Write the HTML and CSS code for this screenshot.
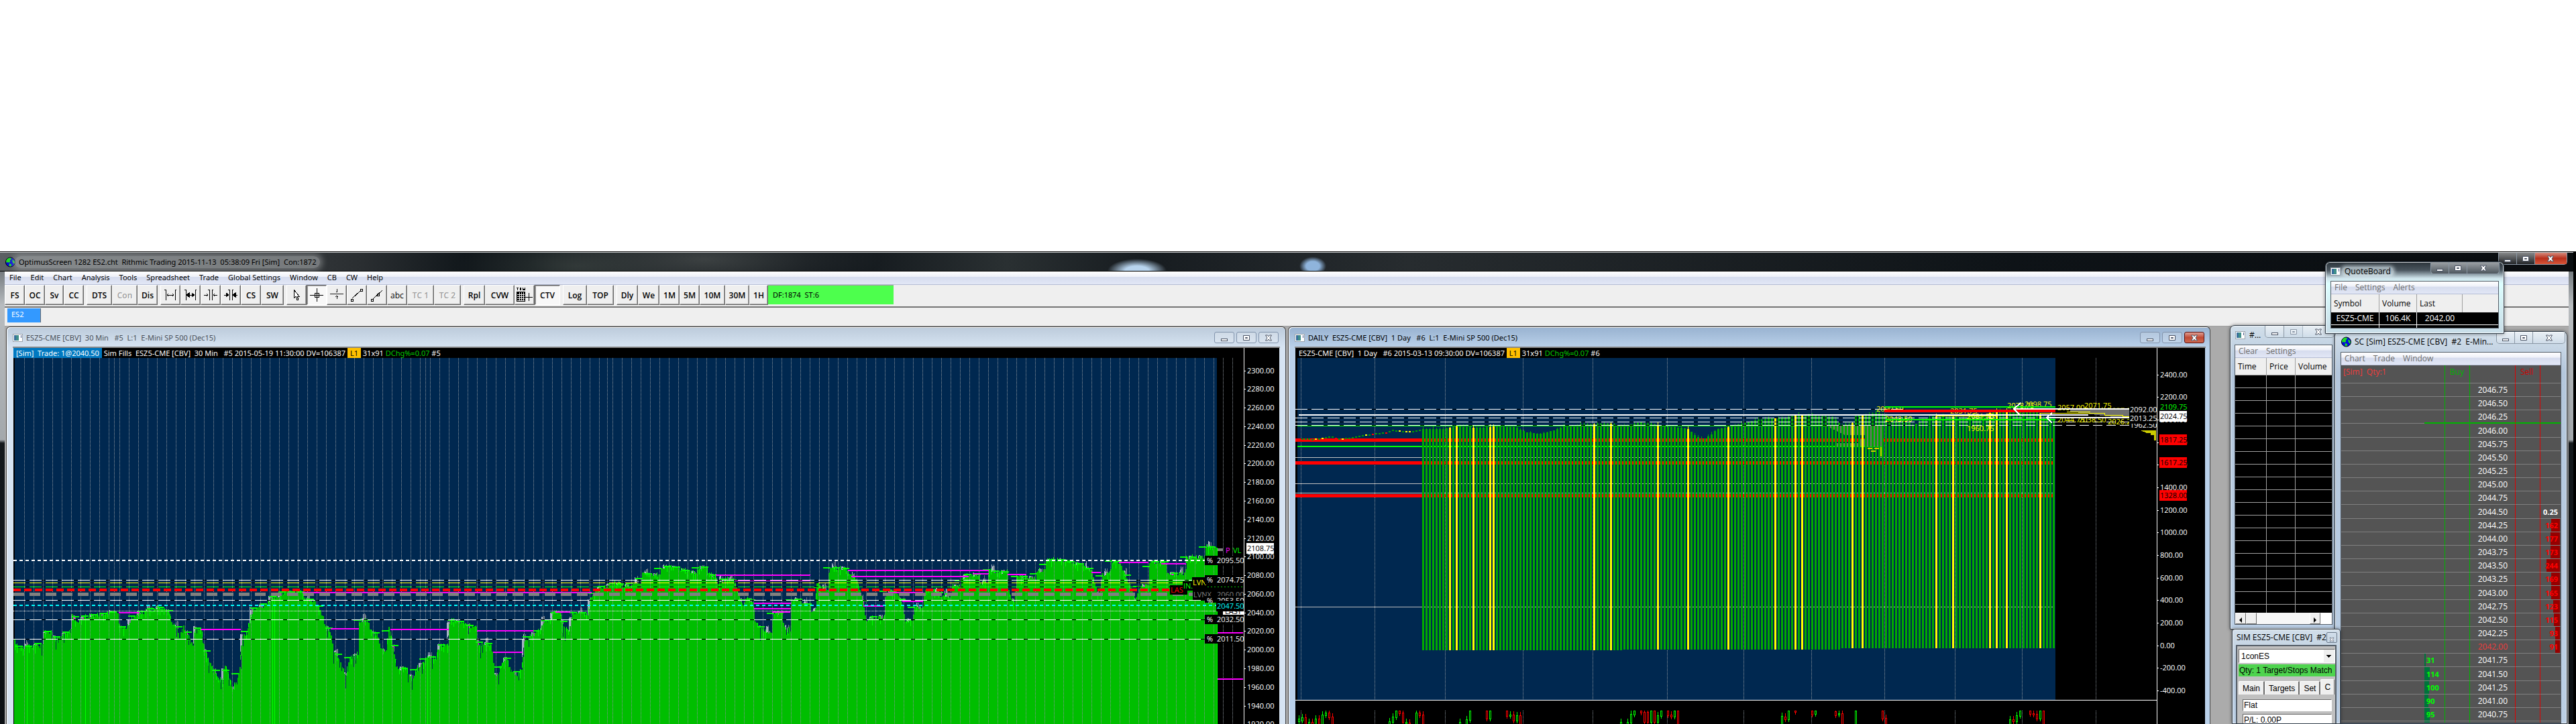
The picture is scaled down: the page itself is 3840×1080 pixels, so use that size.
FILE: index.html
```html
<!DOCTYPE html>
<html lang="en">
<head>
    <meta charset="utf-8">
    <meta name="viewport" content="width=device-width, initial-scale=1">
    <title>OptimusScreen 1282 ES2.cht</title>
    <link rel="stylesheet" href="styles.css">
</head>
<body>
    <!-- shared icons -->
    <svg class="defs" aria-hidden="true">
        <symbol id="i-globe" viewBox="0 0 16 16">
            <circle cx="8" cy="8" r="7.5" fill="#0008e0" stroke="#000"/>
            <path d="M3 3l3-2 4 1-1 2-2 1 1 2-2 2-2-1-2 1-1-3zM11 4l2 1 2 3-1 3-2-2-1-3zM6 10l3 1 1 2-2 2-2-1z" fill="#1fe01f"/>
        </symbol>
        <symbol id="i-app" viewBox="0 0 15 12">
            <rect x=".5" y=".5" width="14" height="11" fill="#fff" stroke="#9aa3ad"/>
            <rect x="2" y="2" width="7" height="8" fill="#3f8f8a"/>
            <rect x="2" y="2" width="3" height="8" fill="#3a6f9c"/>
            <rect x="12" y="2" width="1" height="4" fill="#4a5a8a"/>
        </symbol>
        <symbol id="i-min" viewBox="0 0 12 12"><rect x="1.500" y="7.500" width="9" height="3" fill="#fff" stroke="#4c5566"/></symbol>
        <symbol id="i-max" viewBox="0 0 12 12"><path d="M1.500 2.500h9v7h-9z M4.500 5.500h3v1h-3z" fill="#fff" fill-rule="evenodd" stroke="#4c5566"/></symbol>
        <symbol id="i-close" viewBox="0 0 12 12"><path d="M1.500 2h3L6 4l1.500-2h3L8 6l2.500 4h-3L6 8l-1.500 2h-3L4 6z" fill="#fff" stroke="#4c5566"/></symbol>
    </svg>

    <main class="app">
        <header class="app-title">
            <svg class="globe"><use href="#i-globe"/></svg>
            <h1>OptimusScreen 1282 ES2.cht&nbsp; Rithmic Trading 2015-11-13&nbsp; 05:38:09 Fri [Sim]&nbsp; Con:1872</h1>
            <div class="controls">
                <button aria-label="Minimize"><svg><use href="#i-min"/></svg></button>
                <button aria-label="Maximize"><svg><use href="#i-max"/></svg></button>
                <button class="close" aria-label="Close"><svg><use href="#i-close"/></svg></button>
            </div>
        </header>

        <div class="app-body">
            <nav class="menu">
                <a href="#">File</a><a href="#">Edit</a><a href="#">Chart</a><a href="#">Analysis</a><a href="#">Tools</a><a href="#">Spreadsheet</a><a href="#">Trade</a><a href="#">Global Settings</a><a href="#">Window</a><a href="#">CB</a><a href="#">CW</a><a href="#">Help</a>
            </nav>

            <div class="toolbar">
                <div class="group">
                    <button>FS</button><button>OC</button><button class="w28">Sv</button><button>CC</button>
                </div>
                <div class="group">
                    <button class="w38">DTS</button><button class="w38" disabled>Con</button><button>Dis</button>
                </div>
                <div class="group">
                    <button aria-label="Expand bars"><svg viewBox="0 0 20 20"><path d="M1 2h2v16M19 2h-2v16M5 10h10M7 8l-2 2 2 2M13 8l2 2-2 2"/></svg></button>
                    <button aria-label="Widen bars"><svg viewBox="0 0 20 20"><path d="M1 2h2v16M19 2h-2v16M5 10h10"/><path d="M4 10l4-3v6zM16 10l-4-3v6z" fill="#000"/></svg></button>
                    <button aria-label="Compress bars"><svg viewBox="0 0 20 20"><path d="M8 2v16M12 2v16M6 2h2M12 2h2M0 10h6M4 8l2 2-2 2M20 10h-6M16 8l-2 2 2 2"/></svg></button>
                    <button aria-label="Narrow bars"><svg viewBox="0 0 20 20"><path d="M8 2v16M12 2v16M6 2h2M12 2h2M0 10h6M20 10h-6"/><path d="M3 7l4 3-4 3zM17 7l-4 3 4 3z" fill="#000"/></svg></button>
                    <button>CS</button><button class="w34">SW</button>
                </div>
                <div class="group">
                    <button aria-label="Pointer"><svg viewBox="0 0 20 20"><path d="M6 2v13l3-3 2 6 2-1-2-5h3z" fill="#fff"/></svg></button>
                    <button class="pressed" aria-label="Crosshair"><svg viewBox="0 0 20 20"><path d="M0 10h20M10 0v20M7 7h6v6H7z"/></svg></button>
                    <button aria-label="Horizontal line"><svg viewBox="0 0 22 20"><path d="M0 8h22M11 0v6M9 4l2 2 2-2M11 17v-6M9 13l2-2 2 2"/></svg></button>
                    <button aria-label="Line"><svg viewBox="0 0 20 20"><path d="M3 15l12-11M15 1h3v3h-3zM1 16h3v3H1z"/></svg></button>
                    <button aria-label="Ray"><svg viewBox="0 0 20 20"><path d="M4 16l14-13M10 8h3v3h-3zM1 16h3v3H1z"/></svg></button>
                    <button class="plain">abc</button>
                    <button class="w40" disabled>TC 1</button><button class="w40" disabled>TC 2</button>
                </div>
                <div class="group">
                    <button class="w32">Rpl</button><button class="w44">CVW</button>
                    <button aria-label="TVW"><svg class="tvw" viewBox="0 0 24 24"><path d="M0 1h3M1.500 1v4M5 1l1 4 1-4M9 1l1 4 1-2 1 2 1-4M13 15h11M18.500 9v12"/><path d="M0 7h13v15H0z" fill="#000" stroke="none"/><path d="M1 11h11M1 14h11M1 17h11M1 20h11M4 8v13M7 8v13M10 8v13" stroke="#efefef"/></svg></button>
                    <button class="w38 pressed">CTV</button>
                </div>
                <div class="group">
                    <button class="w36">Log</button><button class="w40">TOP</button>
                </div>
                <div class="group">
                    <button class="w32">Dly</button><button class="w32">We</button><button>1M</button><button>5M</button><button class="w38">10M</button><button class="w36">30M</button><button class="w28">1H</button>
                    <output class="feed">DF:1874&nbsp; ST:6</output>
                </div>
            </div>

            <div class="tabs"><a href="#">ES2</a></div>

            <div class="desktop">
                <section class="child child-30min">
                    <header>
                        <svg class="app-icon"><use href="#i-app"/></svg>
                        <h2>ESZ5-CME [CBV]&nbsp; 30 Min&nbsp;&nbsp; #5&nbsp; L:1&nbsp; E-Mini SP 500 (Dec15)</h2>
                        <div class="mdi-controls">
                            <button aria-label="Minimize"><svg><use href="#i-min"/></svg></button>
                            <button aria-label="Maximize"><svg><use href="#i-max"/></svg></button>
                            <button aria-label="Close"><svg><use href="#i-close"/></svg></button>
                        </div>
                    </header>
                    <div class="chart">
                        <svg id="chart30" viewBox="20 518 1887 562" preserveAspectRatio="xMinYMin slice"></svg>
                        <p><span class="trade">[Sim]&nbsp; Trade: 1@2040.50</span> Sim Fills&nbsp; ESZ5-CME [CBV]&nbsp; 30 Min&nbsp;&nbsp; #5 2015-05-19 11:30:00 DV=106387 <b>L1</b> 31x91 <i>DChg%=0.07</i> #5</p>
                    </div>
                </section>

                <section class="child child-daily">
                    <header>
                        <svg class="app-icon"><use href="#i-app"/></svg>
                        <h2>DAILY&nbsp; ESZ5-CME [CBV]&nbsp; 1 Day&nbsp;&nbsp; #6&nbsp; L:1&nbsp; E-Mini SP 500 (Dec15)</h2>
                        <div class="mdi-controls">
                            <button aria-label="Minimize"><svg><use href="#i-min"/></svg></button>
                            <button aria-label="Maximize"><svg><use href="#i-max"/></svg></button>
                            <button class="close" aria-label="Close"><svg><use href="#i-close"/></svg></button>
                        </div>
                    </header>
                    <div class="chart">
                        <svg id="chartDaily" viewBox="1931 518 1356 562" preserveAspectRatio="xMinYMin slice"></svg>
                        <p>ESZ5-CME [CBV]&nbsp; 1 Day&nbsp;&nbsp; #6 2015-03-13 09:30:00 DV=106387 <b>L1</b> 31x91 <i>DChg%=0.07</i> #6</p>
                    </div>
                </section>
            </div>
        </div>

        <section class="float time-sales">
            <header>
                <svg class="app-icon"><use href="#i-app"/></svg>
                <h2>#...</h2>
                <div class="controls">
                    <button aria-label="Minimize"><svg><use href="#i-min"/></svg></button>
                    <button aria-label="Maximize" disabled><svg><use href="#i-max"/></svg></button>
                    <button class="close" aria-label="Close"><svg><use href="#i-close"/></svg></button>
                </div>
            </header>
            <div class="pane">
                <nav class="menu"><a href="#">Clear</a><a href="#">Settings</a></nav>
                <table>
                    <thead><tr><th>Time</th><th>Price</th><th>Volume</th></tr></thead>
                    <tbody id="sales"></tbody>
                </table>
                <div class="scroll">
                    <button aria-label="Scroll left"><svg viewBox="0 0 8 8"><path d="M6 0v8L2 4z"/></svg></button>
                    <button aria-label="Thumb"></button>
                    <span></span>
                    <button aria-label="Scroll right"><svg viewBox="0 0 8 8"><path d="M2 0v8l4-4z"/></svg></button>
                </div>
            </div>
        </section>

        <section class="float trade-window">
            <header>
                <h2>SIM ESZ5-CME [CBV]&nbsp; #2</h2>
                <button class="small-close" aria-label="Close"><svg><use href="#i-close"/></svg></button>
            </header>
            <form class="pane">
                <select aria-label="Trade configuration"><option>1conES</option></select>
                <output>Qty: 1 Target/Stops Match</output>
                <div class="tab-row">
                    <button type="button">Main</button><button type="button">Targets</button><button type="button">Set</button><button type="button" class="on">C</button>
                </div>
                <div class="fields">
                    <input type="text" aria-label="Position" value="Flat">
                    <input type="text" aria-label="Profit and loss" value="P/L: 0.00P">
                </div>
            </form>
        </section>

        <section class="float dom-window">
            <header>
                <svg class="globe"><use href="#i-globe"/></svg>
                <h2>SC [Sim] ESZ5-CME [CBV]&nbsp; #2&nbsp; E-Min...</h2>
                <div class="controls">
                    <button aria-label="Minimize"><svg><use href="#i-min"/></svg></button>
                    <button aria-label="Maximize"><svg><use href="#i-max"/></svg></button>
                    <button class="close" aria-label="Close"><svg><use href="#i-close"/></svg></button>
                </div>
            </header>
            <div class="pane">
                <nav class="menu"><a href="#">Chart</a><a href="#">Trade</a><a href="#">Window</a></nav>
                <table>
                    <colgroup><col class="c-rest"><col class="c-bid"><col class="c-buy"><col class="c-price"><col class="c-sell"><col></colgroup>
                    <thead>
                        <tr><th colspan="2" class="qty">[Sim]&nbsp; Qty:1</th><th class="buy">Buy</th><th></th><th class="sell">Sell</th><th></th></tr>
                    </thead>
                    <tbody id="ladder"></tbody>
                </table>
            </div>
        </section>

        <section class="float quote-board">
            <header>
                <svg class="app-icon"><use href="#i-app"/></svg>
                <h2>QuoteBoard</h2>
                <div class="controls">
                    <button aria-label="Minimize"><svg><use href="#i-min"/></svg></button>
                    <button aria-label="Maximize"><svg><use href="#i-max"/></svg></button>
                    <button class="close" aria-label="Close"><svg><use href="#i-close"/></svg></button>
                </div>
            </header>
            <div class="pane">
                <nav class="menu"><a href="#">File</a><a href="#">Settings</a><a href="#">Alerts</a></nav>
                <table>
                    <thead><tr><th>Symbol</th><th>Volume</th><th>Last</th><th></th></tr></thead>
                    <tbody>
                        <tr><td>ESZ5-CME</td><td>106.4K</td><td>2042.00</td><td></td></tr>
                        <tr><td></td><td></td><td></td><td></td></tr>
                    </tbody>
                </table>
            </div>
        </section>
    </main>

    <script src="charts.js"></script>
</body>
</html>
```
FILE: styles.css
```css
* {
    margin: 0;
    padding: 0;
    box-sizing: border-box;
}

body {
    min-height: 100vh;
    display: flex;
    flex-direction: column;
    padding-top: 375px;
    overflow: hidden;
    background: #fff;
    font-family: "Noto Sans", "Open Sans", sans-serif;
    font-size: 11px;
    line-height: 14px;
    color: #000;
}

a {
    color: inherit;
    text-decoration: none;
}

h1, h2 {
    font-size: 11px;
    font-weight: 400;
    white-space: pre;
}

button {
    font-family: inherit;
    border: 0;
    background: none;
}

.defs {
    position: absolute;
    width: 0;
    height: 0;
}

.globe {
    width: 15px;
    height: 16px;
    flex: none;
}

.app-icon {
    width: 15px;
    height: 12px;
    flex: none;
}

/* main frame */
.app {
    position: relative;
    flex: 1 0 0;
    height: calc(100vh - 375px);
    display: flex;
    flex-direction: column;
    padding: 0 11px 0 7px;
    overflow: hidden;
    border-top: 1px solid #000;
    background: linear-gradient(to left, #000 4px, transparent 4px), linear-gradient(#50575c 0, #b8bcbf 80px, #a3a8ac 280px, #14191d 285px, #0b0f13 100%);
}

.app-title {
    height: 29px;
    flex: none;
    display: flex;
    align-items: center;
    margin: 0 -7px;
    padding: 0 2px 0 8px;
    gap: 5px;
    border-top: 1px solid #d0d4d6;
    border-bottom: 1px solid #000;
    background:
        radial-gradient(ellipse 44px 18px at 1695px 27px, #b8d4ee 40%, transparent),
        radial-gradient(ellipse 20px 14px at 1957px 20px, #8fb4dc 50%, transparent),
        radial-gradient(ellipse 260px 60px at 1050px 10px, #3c4142, transparent),
        radial-gradient(ellipse 180px 50px at 860px 20px, #2e3635, transparent),
        linear-gradient(to right, #5c6063, #2a2e31 540px, #10161a 700px, #0c1116 1200px, #2a3032 1500px, #171c20 1700px, #272c2f 2100px, #0e1317 3000px, #0a0d10);
}

.app-title h1 {
    padding: 2px 6px;
    margin: 0 auto 0 -6px;
    border-radius: 10px;
    background: rgba(165, 168, 170, 0.6);
    box-shadow: 0 0 8px 4px rgba(165, 168, 170, 0.5);
}

.controls {
    display: flex;
    align-self: flex-start;
    margin-left: auto;
    height: 18px;
    border: 1px solid #8b98a5;
    border-top: 0;
    border-radius: 0 0 5px 5px;
}

.controls button {
    width: 27px;
    display: flex;
    align-items: center;
    justify-content: center;
    border-right: 1px solid #8b98a5;
    background: linear-gradient(rgba(255, 255, 255, 0.5), rgba(255, 255, 255, 0.1));
}

.controls .close {
    width: 47px;
    border-right: 0;
}

.controls svg,
.mdi-controls svg {
    width: 12px;
    height: 12px;
}

.controls button:disabled {
    opacity: 0.5;
}

.app-title .controls {
    margin-right: 7px;
}

.app-title .close {
    background: linear-gradient(#d58a7c, #b8301c 50%, #d8563a);
}

.app-body {
    flex: 1;
    min-height: 0;
    display: flex;
    flex-direction: column;
    background: #efefef;
}

.menu {
    height: 20px;
    flex: none;
    display: flex;
    gap: 14px;
    padding: 2px 7px;
    white-space: nowrap;
    border-bottom: 1px solid #b4bcd4;
    background: linear-gradient(#fff, #eef0f8 40%, #d6dcee 45%, #e2e7f6);
}

.toolbar {
    height: 34px;
    flex: none;
    display: flex;
    align-items: flex-start;
    gap: 4px;
    border-bottom: 2px solid #747474;
}

.group {
    display: flex;
    height: 30px;
}

.group button {
    width: 30px;
    display: flex;
    align-items: center;
    justify-content: center;
    font-family: "Open Sans", sans-serif;
    font-size: 12px;
    font-weight: 600;
    white-space: nowrap;
    background: #efefef;
    border: 1px solid;
    border-color: #fff #696969 #696969 #fff;
    box-shadow: inset -1px -1px #a0a0a0;
}

.group .w28 { width: 28px; }
.group .w32 { width: 32px; }
.group .w34 { width: 34px; }
.group .w36 { width: 36px; }
.group .w38 { width: 38px; }
.group .w40 { width: 40px; }
.group .w44 { width: 44px; }

.group button:disabled {
    color: #a0a0a0;
    text-shadow: 1px 1px #fff;
}

.group .plain {
    font-weight: 400;
}

.group .pressed {
    background: #f8f8f8;
    border-color: #696969 #fff #fff #696969;
    box-shadow: inset 1px 1px #a0a0a0;
}

.group svg {
    width: 20px;
    height: 20px;
    flex: none;
    fill: none;
    stroke: #000;
    shape-rendering: crispEdges;
}

.group .tvw {
    width: 24px;
    height: 24px;
}

.feed {
    width: 187px;
    height: 29px;
    padding: 7px;
    background: #4dff4d;
    border-top: 1px solid #a0a0a0;
}

.tabs {
    height: 27px;
    flex: none;
    padding: 1px 4px;
}

.tabs a {
    display: block;
    width: 50px;
    height: 21px;
    padding: 2px 6px;
    color: #fff;
    background: #3399ff;
    border-right: 1px solid #696969;
}

/* MDI area, the right side stays free for the floating windows */
.desktop {
    flex: 1;
    min-height: 0;
    display: flex;
    gap: 3px;
    padding: 0 534px 0 2px;
    background: #ababab;
    border-top: 1px solid #a0a0a0;
}

.child {
    min-width: 0;
    display: flex;
    flex-direction: column;
    padding: 0 9px 0 10px;
    border: 1px solid #444;
    border-bottom: 0;
    border-radius: 6px 6px 0 0;
    box-shadow: inset 1px 1px #fff;
}

.child-30min {
    flex: 1887 1 0;
    color: #4a5058;
    background: linear-gradient(#bccbdb, #d7e4f2 30px);
}

.child-daily {
    flex: 1356 1 0;
    padding-right: 7px;
    background: linear-gradient(#98b2d0, #bad1ea 30px);
}

.child header {
    height: 31px;
    flex: none;
    display: flex;
    align-items: center;
    gap: 5px;
    margin: 0 -1px;
    padding-top: 2px;
    border-bottom: 2px solid #8a8a8a;
}

.mdi-controls {
    display: flex;
    gap: 3px;
    margin-left: auto;
    padding-right: 2px;
}

.mdi-controls button {
    width: 30px;
    height: 17px;
    display: flex;
    align-items: center;
    justify-content: center;
    border: 1px solid #8294ac;
    border-radius: 3px;
    background: rgba(255, 255, 255, 0.2);
}

.mdi-controls .close {
    border-color: #5a1010;
    background: linear-gradient(#e0a095, #c04a35 50%, #cf6a50);
}

.chart {
    flex: 1;
    min-height: 0;
    display: grid;
    grid-template-rows: minmax(0, 1fr);
    overflow: hidden;
    background: #000;
    color: #fff;
}

.chart svg,
.chart p {
    grid-area: 1 / 1;
}

.chart svg {
    width: 100%;
    height: 100%;
    font-family: "Open Sans", sans-serif;
    shape-rendering: crispEdges;
}

.chart p {
    align-self: start;
    padding: 0 5px;
    line-height: 15px;
    white-space: pre;
}

.child-30min .chart p {
    padding: 0;
}

.chart .trade {
    display: inline-block;
    padding: 0 4px;
    background: #0078c0;
}

.chart b {
    display: inline-block;
    padding: 0 4px;
    font-weight: 400;
    color: #000;
    background: #ffc000;
}

.chart i {
    font-style: normal;
    color: #00c800;
}

/* floating windows */
.float {
    position: absolute;
    display: flex;
    flex-direction: column;
    padding: 0 7px 7px;
    border: 1px solid #34404c;
    border-radius: 7px 7px 0 0;
    background: linear-gradient(#d2dfea, #b4c7dc 60px, #bcd0e6);
    box-shadow: inset 0 0 0 1px rgba(255, 255, 255, 0.7), 0 0 5px rgba(0, 0, 0, 0.5);
    font-family: "Open Sans", sans-serif;
}

.float header {
    flex: none;
    display: flex;
    align-items: center;
    gap: 6px;
    height: 29px;
}

.float h2 {
    font-size: 12px;
}

.pane {
    flex: 1;
    min-height: 0;
    display: flex;
    flex-direction: column;
    overflow: hidden;
    border: 1px solid #555e68;
    background: #efefef;
}

.float .menu {
    color: #6d6d6d;
    font-size: 12px;
    gap: 12px;
    padding: 2px 5px;
    height: 19px;
}

.float table {
    border-collapse: separate;
    border-spacing: 0;
    table-layout: fixed;
    width: 100%;
    font-size: 12px;
}

.float th {
    font-weight: 400;
    text-align: left;
}

.time-sales {
    top: 109px;
    right: 358px;
    width: 158px;
    height: 454px;
    padding: 0 4px 6px 6px;
}

.time-sales header {
    padding-left: 1px;
    height: 28px;
}

.time-sales .controls button { width: 28px; }
.time-sales .controls .close { width: 46px; }

.time-sales th {
    height: 26px;
    padding-left: 4px;
    border-right: 1px solid #a0a0a0;
    border-bottom: 1px solid #a0a0a0;
}

.time-sales th:nth-child(1) { width: 47px; }
.time-sales th:nth-child(2) { width: 43px; }

.time-sales td {
    height: 19px;
    background: #000;
    border-right: 1px solid #a0a0a0;
    border-bottom: 1px solid #a0a0a0;
}

.time-sales th:last-child,
.time-sales td:last-child {
    border-right: 0;
}

.time-sales table {
    flex: 1;
    min-height: 0;
    overflow: hidden;
    display: block;
}

.time-sales thead,
.time-sales tbody {
    display: table;
    table-layout: fixed;
    width: 100%;
}

.time-sales td:nth-child(1) { width: 47px; }
.time-sales td:nth-child(2) { width: 43px; }

.scroll {
    display: flex;
    flex: none;
    height: 17px;
    background: #fff;
}

.scroll button {
    width: 16px;
    background: #efefef;
    border: 1px solid;
    border-color: #fff #696969 #696969 #fff;
}

.scroll span {
    width: 79px;
    background: #f7f7f7;
}

.scroll svg {
    width: 8px;
    height: 8px;
}

.trade-window {
    z-index: 1;
    top: 562px;
    right: 351px;
    bottom: 0;
    width: 162px;
    padding: 0 5px;
    border-radius: 4px 4px 0 0;
}

.trade-window header {
    height: 23px;
    justify-content: space-between;
    gap: 0;
    padding-left: 1px;
    white-space: nowrap;
}

.small-close {
    width: 16px;
    height: 16px;
    flex: none;
    border: 1px solid #6c7a8a;
    border-radius: 2px;
}

.small-close svg {
    width: 8px;
    height: 8px;
}

.trade-window .pane {
    padding: 4px 0 0 2px;
    gap: 2px;
    border-width: 2px 2px 0;
    background: #c0c0c0;
    font-family: "Liberation Sans", Arial, sans-serif;
    font-size: 12px;
    line-height: 18px;
    white-space: nowrap;
}

.trade-window select,
.trade-window input {
    width: 100%;
    font-family: inherit;
    font-size: 12px;
    color: #000;
    border: 1px solid;
    border-color: #696969 #fff #fff #696969;
    border-radius: 0;
    background: #fff;
}

.trade-window select {
    height: 21px;
    flex: none;
    padding-left: 3px;
    appearance: none;
    background:
        linear-gradient(#000, #000) right 5px top 8px / 7px 1px no-repeat,
        linear-gradient(#000, #000) right 6px top 9px / 5px 1px no-repeat,
        linear-gradient(#000, #000) right 7px top 10px / 3px 1px no-repeat,
        linear-gradient(#000, #000) right 8px top 11px / 1px 1px no-repeat,
        linear-gradient(#efefef, #efefef) right / 16px no-repeat,
        #fff;
}

.trade-window output {
    height: 18px;
    flex: none;
    padding-left: 1px;
    background: #4ed44e;
}

.tab-row {
    display: flex;
    flex: none;
    align-items: flex-end;
    height: 23px;
    margin-top: 2px;
}

.tab-row button {
    height: 20px;
    padding: 0 5px;
    font-size: 12px;
    background: #efefef;
    border-top: 1px solid #fff;
    border-left: 1px solid #fff;
    border-right: 2px solid #696969;
    border-radius: 2px 2px 0 0;
}

.tab-row .on {
    height: 23px;
    border-right-width: 1px;
}

.fields {
    display: flex;
    flex-direction: column;
    gap: 4px;
    padding: 5px 5px 0 6px;
}

.fields input {
    height: 18px;
    flex: none;
    padding-left: 1px;
}

.dom-window {
    top: 118px;
    right: 13px;
    bottom: 0;
    width: 347px;
    padding: 0 8px;
}

.dom-window header {
    height: 30px;
    gap: 5px;
    padding-left: 1px;
}

.dom-window .controls,
.quote-board .controls {
    margin-right: -1px;
}

.dom-window h2 {
    white-space: nowrap;
}

.dom-window table {
    color: #fff;
}

.dom-window .pane {
    background: #545454;
}

.dom-window th {
    height: 27px;
    padding: 0 0 6px 3px;
    border-bottom: 1px solid #808080;
}

.dom-window td {
    height: 20px;
    border-bottom: 1px solid #808080;
    line-height: 17px;
    vertical-align: middle;
}

/* the ladder takes one extra pixel every sixth row */
.dom-window tbody tr:nth-child(6n+4) td {
    height: 21px;
}

.c-rest { width: 124px; }
.c-bid { width: 30px; }
.c-buy { width: 38px; }
.c-price { width: 67px; }
.c-sell { width: 38px; }

.dom-window .buy {
    border-left: 1px solid #00b400;
    border-right: 1px solid #00b400;
}

.dom-window .sell {
    border-left: 1px solid #e00000;
    border-right: 1px solid #e00000;
}

.dom-window th.qty { color: #f03c3c; }
.dom-window th.buy { color: #00b400; padding-left: 7px; }
.dom-window th.sell { color: #d00000; padding-left: 7px; }

.dom-window td.price {
    text-align: right;
    padding-right: 11px;
}

.dom-window .last { color: #f03c3c; }

.dom-window .mark td:not(.rest) {
    border-bottom: 2px solid #00b400;
}

.dom-window .bid,
.dom-window .ask {
    font-size: 11px;
    font-weight: 700;
    color: #00ff00;
    white-space: nowrap;
    background: linear-gradient(#00733c, #00733c) left / var(--size, 0) 100% no-repeat;
    padding-left: 3px;
}

.dom-window .ask {
    text-align: right;
    padding: 0 4px 0 0;
    color: #ff0000;
    background: linear-gradient(#960000, #960000) right 1px top / var(--size, 0) 100% no-repeat;
}

.dom-window .spread {
    color: #fff;
}

.quote-board {
    top: 14px;
    right: 107px;
    width: 267px;
    height: 108px;
    background: linear-gradient(#2c343b, #4a555e 12px, #cfe4ec 24px, #dff 32px, #c8dde8);
}

.quote-board header {
    height: 28px;
}

.quote-board h2 {
    padding: 0 4px;
    margin-left: -4px;
    border-radius: 6px;
    background: rgba(220, 235, 242, 0.6);
    box-shadow: 0 0 5px 2px rgba(220, 235, 242, 0.6);
}

.quote-board .controls {
    background: #3a444c;
}

.quote-board .pane {
    background: #000;
}

.quote-board th {
    height: 27px;
    padding-left: 4px;
    background: #efefef;
    border-right: 1px solid #a0a0a0;
}

.quote-board th:nth-child(1) { width: 72px; }
.quote-board th:nth-child(2) { width: 56px; }
.quote-board th:nth-child(3) { width: 68px; }

.quote-board td {
    height: 19px;
    color: #fff;
    background: #000;
    border-right: 1px solid #fff;
    border-bottom: 1px solid #fff;
    text-align: center;
}

.quote-board td:nth-child(n+3),
.quote-board th:last-child {
    border-right: 0;
}
```
FILE: charts.js
```js
const NS = 'http://www.w3.org/2000/svg';

function add(svg, name, attrs, text) {
    const el = document.createElementNS(NS, name);
    for (const key in attrs) el.setAttribute(key, attrs[key]);
    if (text) el.textContent = text;
    svg.appendChild(el);
    return el;
}

function rect(svg, x, y, width, height, fill) {
    return add(svg, 'rect', { x, y, width, height, fill });
}

function hline(svg, x1, x2, y, color, width = 1, dash = '') {
    add(svg, 'path', { d: `M${x1} ${y}H${x2}`, stroke: color, 'stroke-width': width, 'stroke-dasharray': dash });
}

function vline(svg, x, y1, y2, color, dash = '') {
    add(svg, 'path', { d: `M${x + 0.5} ${y1}V${y2}`, stroke: color, 'stroke-dasharray': dash });
}

// label centred on y
function label(svg, x, y, text, color = '#fff', box) {
    if (box) rect(svg, box[0], y - 8, box[1], 16, box[2]);
    add(svg, 'text', { x, y: y + 4, fill: color, 'font-size': 11 }, text);
}

// same sequence on every load
let seed = 7;
function rnd() {
    seed = (seed * 16807) % 2147483647;
    return seed / 2147483647;
}

function level(points, x) {
    for (let i = 1; i < points.length; i++) {
        if (x <= points[i][0]) {
            const [x0, y0] = points[i - 1];
            const [x1, y1] = points[i];
            return y0 + (y1 - y0) * (x - x0) / (x1 - x0 || 1);
        }
    }
    return points[points.length - 1][1];
}

const pairs = (text, fx, fy) => text.trim().split(/\s+/).map(p => {
    const [x, y] = p.split(',').map(Number);
    return [fx(x), fy(y)];
});

/* ---- 30 minute chart ---- */
function draw30() {
    const svg = document.getElementById('chart30');
    const left = pairs(`34,520 45,560 60,545 80,545 103,530 105,485 125,480 135,515 150,495 171,480 174,405 190,440
        197,420 220,408 250,405 270,392 287,395 290,455 300,470 312,450 318,420 335,400 360,385 385,372 400,380 412,395
        415,435 430,460 435,510 445,450 455,495 465,515 467,560 470,520 474,465 490,470 497,560 505,600 520,650 530,690
        542,700 545,625 550,640 560,700 565,740 575,690 583,640 588,500 600,490 608,420 615,380 630,370 640,365 655,345
        658,330 680,320 692,303 735,303 740,335 765,340 775,375 785,410 790,450 805,490 810,560 825,600 835,650 840,680
        850,600 872,580 874,430 895,430 900,475 920,500 925,560 940,570 945,455 952,500 960,600 970,650 985,640 1005,690
        1015,640 1030,620 1040,590 1060,600 1070,540 1091,545 1093,425 1115,435 1140,455 1159,455 1162,550 1180,530
        1195,540 1205,680 1215,650 1230,600 1245,650 1258,680 1270,640 1275,520 1290,500 1300,490 1315,470 1322,435
        1340,430 1346,390 1365,400 1368,450 1385,480 1392,400 1410,395 1430,400 1436,340 1450,300 1460,285 1480,275
        1495,262 1501,268`, x => x / 1.6333, y => 780 + y / 3);
    const right = pairs(`0,265 20,275 40,262 58,258 60,217 75,225 103,228 105,190 130,188 150,200 180,215 193,220 196,195
        217,190 222,225 240,230 242,265 265,245 285,250 290,295 305,370 312,330 331,345 333,430 345,460 360,480 375,490
        378,400 400,395 403,430 412,480 420,450 423,340 445,335 455,365 470,350 472,390 482,380 485,260 495,285 513,290
        515,195 555,197 562,220 580,240 590,300 600,370 605,430 625,415 650,415 652,300 680,300 695,370 700,430 718,430
        722,370 743,380 745,300 770,295 790,320 813,320 815,275 835,275 837,240 858,225 880,225 885,265 902,255 904,205
        925,215 949,210 953,310 965,350 972,235 1000,235 1018,240 1020,210 1041,205 1043,160 1090,160 1110,175 1130,180
        1155,210 1157,230 1170,320 1180,225 1200,215 1202,165 1222,170 1232,210 1245,260 1260,340 1270,280 1292,270
        1294,168 1336,168 1338,220 1383,220 1385,148 1429,145 1430,102 1461,105`, x => 920 + x / 1.6333, y => 780 + y / 3);
    const tops = left.concat(right);

    rect(svg, 22, 533, 1792, 547, '#002850');

    // profile pieces behind the fill
    for (let x = 36; x < 1814; x += 14) {
        const y = level(tops, x + 3);
        const rise = rnd() < 0.35 ? 10 : 2;
        for (let i = 0; i < 6; i++) rect(svg, x + i, y - rnd() * rise, 1, 26 - i * 3, i < 3 ? '#a9b4c6' : '#707a86');
        if (rnd() < 0.3) rect(svg, x + 2, y + 2, 4, 3, '#ff00ff');
    }

    let d = 'M21 1080';
    for (let x = 21; x < 1815; x += 2) {
        const y = Math.round(level(tops, x) + rnd() * 5 - 1);
        d += `V${y}H${x + 2}`;
    }
    add(svg, 'path', { d: d + 'V1080Z', fill: '#00be00' });

    for (let x = 22; x < 1812; x += 3) {
        if (rnd() < 0.55) {
            const y = level(tops, x);
            rect(svg, x, y - rnd() * 3, 1, 4 + rnd() * 11, '#00ff00');
        }
        // cuts below the edge show the background
        if (rnd() < 0.3 && level(tops, x) > 930) rect(svg, x + 1, level(tops, x), 1, 6 + rnd() * 16, '#002850');
    }
    for (let x = 22; x < 1808; x += 14) {
        const y = Math.min(level(tops, x + 3), level(tops, x + 10));
        rect(svg, x + 1, Math.round(y), 11, 2, '#00ff00');
    }
    [40, 127, 406, 409, 637].forEach(x => vline(svg, x, level(tops, x), 1080, '#00ff00'));
    vline(svg, 1814, 816, 1080, '#00ff00');

    // session separators
    const grid = [170, 634, 905];
    for (let x = 36; x <= 162; x += 14) grid.push(x);
    for (let x = 178; x <= 626; x += 14) grid.push(x);
    for (let x = 641; x <= 898; x += 14) grid.push(x);
    for (let x = 913; x <= 1837; x += 14) grid.push(x);
    grid.forEach(x => vline(svg, x, 533, 1080, '#8c949c', '1 1'));

    // naked points of control
    [[451, 882, 883], [177, 208, 913], [299, 359, 938], [493, 535, 937], [582, 669, 938], [711, 795, 940], [735, 779, 972],
     [828, 850, 912], [1067, 1208, 857], [1096, 1208, 865], [1124, 1179, 899], [1124, 1179, 907], [1151, 1178, 912],
     [1264, 1474, 850], [1269, 1444, 859], [1450, 1474, 855], [1502, 1530, 856], [1668, 1712, 838], [1731, 1768, 840],
     [1324, 1376, 883], [1345, 1376, 896], [1287, 1317, 903], [1627, 1641, 853], [1815, 1853, 943], [1815, 1853, 1012]
    ].forEach(([a, b, y]) => hline(svg, a, b, y, '#ff00ff', 2));

    hline(svg, 20, 1796, 835, '#fff', 2, '5 4');
    [[864.5, '#fff'], [868.5, '#ffff00'], [874.5, '#00ff00'], [894.5, '#fff'], [923.5, '#fff'], [952.5, '#fff']].forEach(([y, c]) => {
        hline(svg, 20, 1796, y, '#000');
        hline(svg, 20, 1796, y, c, 1, '18 6');
    });
    hline(svg, 20, 1745, 879, '#ff0000', 4, '11 5');
    hline(svg, 20, 1779, 885.5, '#808080', 5, '16 8');
    hline(svg, 20, 1814, 902, '#00ffff', 2, '5 4');
    hline(svg, 20, 1854, 910.5, '#fff', 1, '1 1');

    // line captions
    rect(svg, 1744, 872, 26, 14, '#000');
    label(svg, 1745, 879, 'LAS', '#ff0000');
    rect(svg, 1763, 866, 91, 14, '#000');
    label(svg, 1764, 873, 'IN.', '#00ff00');
    label(svg, 1778, 868, 'LVN', '#ffff00', [1777, 76, '#000']);
    hline(svg, 1800, 1853, 870.5, '#ffff00', 1, '5 3');
    hline(svg, 1800, 1853, 874.5, '#00c800', 1, '2 3');
    rect(svg, 1778, 880, 76, 14, '#000');
    label(svg, 1779, 886, 'LVNX', '#808080');
    label(svg, 1814, 886, '2060.00', '#808080');
    [835, 864, 895, 923, 952].forEach((y, i) => {
        rect(svg, 1796, y - 7, 58, i === 2 ? 10 : 14, '#000');
        label(svg, 1799, y, '%');
        label(svg, 1814, y, ['2095.50', '2074.75', '2053.50', '2032.50', '2011.50'][i]);
    });
    rect(svg, 1823, 909, 31, 7, '#fff');
    label(svg, 1826, 911, 'LAST', '#000');
    label(svg, 1814, 903, '2047.50', '#00ffff', [1813, 41, '#000']);
    label(svg, 1827, 820, 'P', '#ff00ff');
    label(svg, 1838, 820, 'VL', '#00ff00');
    rect(svg, 1815, 817, 8, 4, '#808080');

    vline(svg, 1854, 518, 1080, '#fff');
    for (let i = 0; i < 20; i++) {
        const y = Math.round(551.5 + i * 27.78);
        hline(svg, 1855, 1857, y + 0.5, '#fff');
        label(svg, 1859, y, (2300 - i * 20).toFixed(2));
    }
    label(svg, 1859, 817, '2108.75', '#000', [1858, 41, '#fff']);
}

/* ---- daily chart ---- */
function drawDaily() {
    const svg = document.getElementById('chartDaily');
    const tops = pairs(`385,477 440,477 470,465 530,472 575,465 625,470 650,490 685,500 720,485 750,465 790,457 870,452
        900,462 950,448 990,458 1010,465 1040,470 1070,475 1090,505 1110,525 1130,505 1145,480 1170,470 1200,458 1240,440
        1280,430 1330,425 1360,415 1390,418`, x => 1900 + x / 1.742, y => 480 + y / 3)
        .concat(pairs(`10,363 80,370 110,400 150,395 165,365 200,360 250,350 280,365 320,385 350,370 380,400 420,380
        460,365 550,370 580,375 600,360 650,365 680,345 740,340 800,345 850,350 870,370 910,375`,
        x => 2700 + x / 2.529, y => 480 + y / 2.613));
    const drift = pairs('65,102 100,104 130,100 150,92 175,103 200,98 240,86 275,78 300,74 320,63 350,70 375,70 395,60',
        x => 1900 + x / 1.823, y => 620 + y / 3);

    rect(svg, 1934, 533, 1130, 510, '#002850');
    [1939, 2049, 2154, 2270, 2374, 2485, 2599, 2700, 2809, 2914, 3014, 3124].forEach(x => {
        vline(svg, x, 533, 1043, '#8c949c', '1 1');
        vline(svg, x, 1059, 1080, '#8c949c', '1 1');
    });

    // support zones
    [681, 720, 734, 904].forEach(y => hline(svg, 1931, 3061, y + 0.5, '#c0c0c0'));
    [653, 687, 736].forEach(y => rect(svg, 1931, y, 1130, 5, '#ff0000'));
    rect(svg, 1934, 664, 872, 2, '#00ff00');
    rect(svg, 1934, 634, 872, 1, '#00ff00');
    add(svg, 'path', { d: 'M2722 634H2806V665H2736V660H2770V654H2780V648H2750Z', fill: '#707070' });

    for (let x = 1935; x < 2118; x += 5) {
        const r = rnd();
        rect(svg, x, Math.round(level(drift, x)) - 1, 3, 2, r < 0.15 ? '#ff0000' : r < 0.25 ? '#ffff00' : '#00a000');
    }

    // daily bars
    const yellow = [8, 10, 15, 20, 21, 51, 56, 70, 79, 91, 105, 111, 113, 128, 131, 153, 158, 169, 171, 174, 184];
    for (let i = 0; i < 189; i++) {
        const x = 2120 + i * 5;
        const y = Math.round(level(tops, x));
        const bottom = i < 60 ? 969 : i < 125 ? 968 : 966;
        const color = yellow.includes(i) ? '#ffff00' : '#00aa00';
        rect(svg, x, y, 3, bottom - y, color);
        rect(svg, x + 1, y - rnd() * 4, 1, 4, color);
    }
    // volume profile on the right edge of the last contract
    for (let i = 0; i < 3; i++) rect(svg, 2784 + i * 5, 667 + i % 2 * 4, 7, 2, '#cccc00');
    rect(svg, 2803, 666, 2, 14, '#cccc00');

    // current levels
    [609.5, 622.5, 628.5, 633.5].forEach(y => {
        hline(svg, 1931, 2840, y, '#000');
        hline(svg, 1931, 2840, y, '#fff', 1, '18 6');
    });
    hline(svg, 2840, 3174, 633.5, '#fff', 1, '14 6');
    hline(svg, 2840, 3174, 628.5, '#fff', 1, '14 6');
    hline(svg, 2840, 3051, 622.5, '#fff', 1, '14 6');

    // prior pivots
    [[2797, 609, '2090.50'], [2907, 612, '2031.75'], [2992, 604, '2078.75'], [3018, 602, '2098.75'], [2810, 624, '2043.50'],
     [2932, 620, '2081.75'], [2932, 638, '1960.75'], [3067, 607, '2057.00'], [3107, 604, '2071.75'],
     [3067, 625, '2044.75'], [3099, 625, '2038.50'], [3142, 628, '2026.25']
    ].forEach(([x, y, t]) => label(svg, x, y, t, '#ffff00'));
    label(svg, 3142, 611, '2037.00', '#808000');

    rect(svg, 2809, 605, 255, 2, '#00ff00');
    rect(svg, 2809, 610, 255, 4, '#ff0000');
    rect(svg, 2811, 624, 253, 2, '#00ff00');
    add(svg, 'path', { d: 'M3086 609H3174V621H3150L3086 613Z', fill: '#707070' });
    add(svg, 'path', { d: 'M2887 619.5H2976M3040 615.5H3137V618.5H3164V620.5H3174M3081 613.5H3116', stroke: '#ffff00', fill: 'none' });
    rect(svg, 3001, 608, 173, 2, '#fff');
    rect(svg, 3051, 621, 123, 2, '#fff');
    rect(svg, 1936, 617, 1177, 2, '#fff');
    add(svg, 'path', { d: 'M3012 600L3002 609L3011 618M3059 615L3051 622L3059 630', stroke: '#fff', fill: 'none', 'stroke-width': 2 });
    rect(svg, 3174, 602, 41, 14, '#000');
    rect(svg, 3174, 629, 41, 9, '#000');
    label(svg, 3175, 633, '1962.50');
    label(svg, 3175, 623, '2013.25', '#fff', [3174, 41, '#000']);
    label(svg, 3175, 610, '2092.00');
    add(svg, 'path', { d: 'M3191 641H3214V656H3211V648H3206V645H3200Z', fill: '#cccc00' });

    // price scale
    vline(svg, 3215, 518, 1080, '#fff');
    for (let p = 2400; p >= -400; p -= 200) {
        const y = Math.round(557.7 + (2400 - p) / 200 * 33.65);
        hline(svg, 3216, 3218, y + 0.5, '#fff');
        label(svg, 3220, y, p.toFixed(2));
    }
    label(svg, 3220, 606, '2109.75', '#00ff00', [3219, 41, '#000']);
    label(svg, 3220, 620, '2024.75', '#000', [3219, 41, '#fff']);
    label(svg, 3220, 655, '1817.25', '#000', [3219, 41, '#ff0000']);
    label(svg, 3220, 689, '1617.25', '#000', [3219, 41, '#ff0000']);
    label(svg, 3220, 738, '1328.00', '#000', [3219, 41, '#ff0000']);

    // lower study
    rect(svg, 1931, 1043, 1285, 1, '#fff');
    const g = '#00ff00', r = '#ff0000';
    [[1936, 1071, 1075, g], [1941, 1069, 1074, g], [1946, 1069, 1080, r], [1951, 1076, 1080, g], [1956, 1076, 1080, r],
     [1961, 1071, 1080, g], [1966, 1071, 1080, r], [1971, 1065, 1080, g], [1976, 1062, 1066, g], [1981, 1062, 1069, r],
     [1986, 1068, 1080, r], [2071, 1075, 1080, g], [2076, 1068, 1076, g], [2081, 1059, 1069, g], [2086, 1059, 1063, r],
     [2091, 1062, 1076, r], [2096, 1076, 1078, g], [2101, 1077, 1079, r], [2111, 1062, 1080, g], [2116, 1062, 1066, r],
     [2121, 1065, 1080, r], [2176, 1076, 1080, g], [2186, 1072, 1080, g], [2191, 1059, 1073, g], [2216, 1059, 1071, r],
     [2221, 1059, 1071, g], [2246, 1059, 1067, r], [2251, 1065, 1067, g], [2256, 1065, 1074, r], [2261, 1066, 1074, g],
     [2266, 1066, 1080, r], [2416, 1076, 1080, g], [2426, 1076, 1080, g], [2431, 1064, 1077, g], [2436, 1059, 1065, g],
     [2446, 1059, 1062, r], [2451, 1061, 1076, r], [2456, 1061, 1076, r], [2461, 1059, 1076, g], [2466, 1059, 1076, r],
     [2471, 1066, 1076, g], [2476, 1059, 1067, g], [2486, 1059, 1066, r], [2491, 1065, 1068, r], [2496, 1059, 1068, g],
     [2501, 1059, 1080, r], [2656, 1067, 1080, g], [2661, 1068, 1072, r], [2666, 1059, 1072, g], [2676, 1059, 1061, r],
     [2701, 1059, 1065, r], [2706, 1059, 1064, g], [2736, 1060, 1066, r], [2741, 1063, 1065, g], [2746, 1063, 1080, r],
     [2766, 1059, 1080, g], [2806, 1059, 1071, r], [2811, 1070, 1080, r], [2996, 1072, 1080, g], [3001, 1072, 1075, r],
     [3006, 1066, 1075, g], [3011, 1059, 1067, g], [3026, 1059, 1064, r], [3031, 1063, 1065, r], [3036, 1064, 1071, r],
     [3041, 1059, 1071, g], [3046, 1059, 1080, r]
    ].forEach(([x, y1, y2, c]) => {
        vline(svg, x, Math.max(1059, y1 - 5), y2 + 4, c);
        add(svg, 'path', { d: `M${x - 0.5} ${y1 + 0.5}h2V${y2 + 0.5}h-2z`, fill: '#000', stroke: c });
    });
}

/* ---- price ladder and time & sales ---- */
function fillTables() {
    const ask = { 2044.25: [162, 13], 2044: [177, 14], 2043.75: [173, 14], 2043.5: [244, 20], 2043.25: [169, 13],
                  2043: [165, 13], 2042.75: [123, 10], 2042.5: [115, 9], 2042.25: [93, 7], 2042: [91, 7] };
    const bid = { 2041.75: [31, 2], 2041.5: [114, 8], 2041.25: [100, 7], 2041: [90, 6], 2040.75: [95, 8], 2040.5: ['', 8] };
    const cell = (side, q) => q ? `<td class="${side}" style="--size: ${q[1]}px">${q[0]}</td>` : `<td class="${side}"></td>`;

    let html = '';
    for (let p = 2046.75; p >= 2040.5; p -= 0.25) {
        const mark = p === 2046.25 ? ' class="mark"' : '';
        const last = p === 2042 ? ' last' : '';
        const price = p > 2040.5 ? p.toFixed(2) : '';
        const right = p === 2044.5 ? '<td class="ask spread">0.25</td>' : cell('ask', ask[p]);
        html += `<tr${mark}><td class="rest"></td>${cell('bid', bid[p])}<td class="buy"></td>` +
            `<td class="price${last}">${price}</td><td class="sell"></td>${right}</tr>`;
    }
    document.getElementById('ladder').innerHTML = html;
    document.getElementById('sales').innerHTML = '<tr><td></td><td></td><td></td></tr>'.repeat(19);
}

draw30();
drawDaily();
fillTables();
```
